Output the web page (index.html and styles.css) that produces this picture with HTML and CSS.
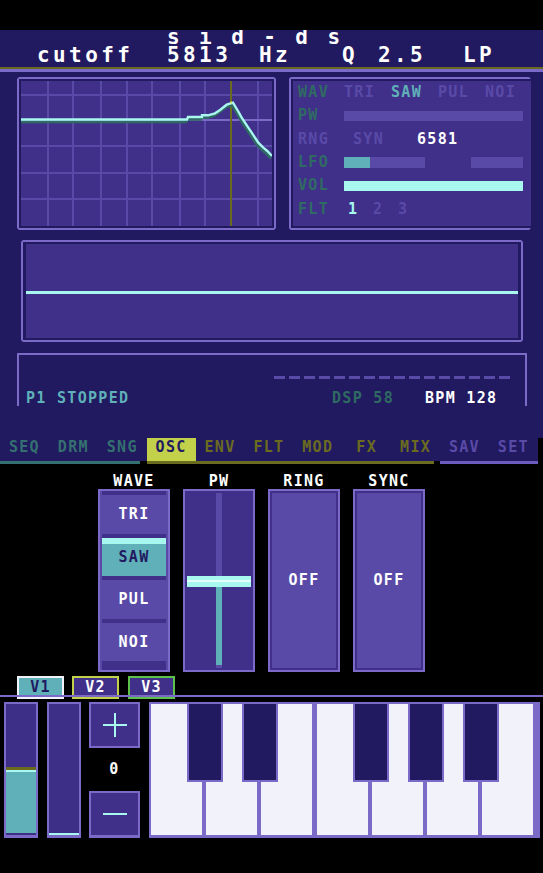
FILE: index.html
```html
<!DOCTYPE html>
<html lang="en">

<head>
    <meta charset="UTF-8">
    <meta name="viewport" content="width=device-width, initial-scale=1.0">
    <title>sid-ds</title>
    <link rel="stylesheet" href="styles.css">
</head>

<body>
    <div class="notch"></div>

    <header class="header">
        <div class="header-body">
            <div class="title">s i d - d s</div>
            <div class="readout">
                <span class="r-cutoff">cutoff</span>
                <span class="r-freq">5813</span>
                <span class="r-hz">Hz</span>
                <span class="r-q">Q</span>
                <span class="r-res">2.5</span>
                <span>LP</span>
            </div>
        </div>
    </header>

    <div class="deck">
        <div class="top-row">
            <!-- filter response -->
            <div class="frame graph">
                <div class="fill">
                    <svg width="251" height="145" viewBox="0 0 251 145">
                        <g fill="#5a4aa8" shape-rendering="crispEdges">
                            <rect x="26" y="0" width="2" height="145" />
                            <rect x="51" y="0" width="2" height="145" />
                            <rect x="79" y="0" width="2" height="145" />
                            <rect x="105" y="0" width="2" height="145" />
                            <rect x="130" y="0" width="2" height="145" />
                            <rect x="158" y="0" width="2" height="145" />
                            <rect x="183" y="0" width="2" height="145" />
                            <rect x="236" y="0" width="2" height="145" />
                            <rect x="0" y="13" width="251" height="2" />
                            <rect x="0" y="64" width="251" height="2" />
                            <rect x="0" y="91" width="251" height="2" />
                            <rect x="0" y="117" width="251" height="2" />
                        </g>
                        <rect x="0" y="38" width="251" height="2" fill="#7b6ac8" shape-rendering="crispEdges" />
                        <rect x="209" y="0" width="2" height="145" fill="#6b6b1f" shape-rendering="crispEdges" />
                        <polyline fill="none" stroke="#2f6b62" stroke-width="2.6" transform="translate(-1 2.5)"
                            points="0,38.5 166,38.5 167,36 181,36 181,34.3 187,34.3 194,32.3 199,29 205.7,23.7 212,21.7 214,25 217,30 220.7,36.7 224,41.7 227.3,46.7 230.7,51.7 234,56.7 237.3,61.7 242.3,66.7 246.3,70 251,75" />
                        <polyline fill="none" stroke="#a8f8f0" stroke-width="2.4"
                            points="0,38.5 166,38.5 167,36 181,36 181,34.3 187,34.3 194,32.3 199,29 205.7,23.7 212,21.7 214,25 217,30 220.7,36.7 224,41.7 227.3,46.7 230.7,51.7 234,56.7 237.3,61.7 242.3,66.7 246.3,70 251,75" />
                        <rect x="209" y="20.5" width="2" height="2" fill="#d8e060" />
                    </svg>
                </div>
            </div>

            <!-- voice summary -->
            <div class="frame params">
                <div class="fill param-list">
                    <div class="prow">
                        <span class="plabel">WAV</span>
                        <span class="opt">TRI</span>
                        <span class="opt on">SAW</span>
                        <span class="opt">PUL</span>
                        <span class="opt">NOI</span>
                    </div>
                    <div class="prow">
                        <span class="plabel">PW</span>
                        <span class="bar pw-bar"></span>
                    </div>
                    <div class="prow">
                        <span class="plabel dim">RNG</span>
                        <span class="syn">SYN</span>
                        <span class="chip">6581</span>
                    </div>
                    <div class="prow">
                        <span class="plabel">LFO</span>
                        <span class="bar lfo-bar"><span class="bar-level" style="width: 26px"></span></span>
                        <span class="bar lfo-bar2"></span>
                    </div>
                    <div class="prow">
                        <span class="plabel">VOL</span>
                        <span class="bar vol-bar"></span>
                    </div>
                    <div class="prow">
                        <span class="plabel">FLT</span>
                        <span class="flt-num first on">1</span>
                        <span class="flt-num">2</span>
                        <span class="flt-num">3</span>
                    </div>
                </div>
            </div>
        </div>

        <!-- oscilloscope -->
        <div class="frame scope">
            <div class="fill scope-fill">
                <div class="trace"></div>
            </div>
        </div>

        <!-- transport -->
        <div class="status">
            <div class="dashes"></div>
            <div class="status-line">
                <span class="st-state">P1 STOPPED</span>
                <span class="st-dsp">DSP 58</span>
                <span>BPM 128</span>
            </div>
        </div>
    </div>

    <nav class="tabs">
        <span class="tab seq">SEQ</span>
        <span class="tab seq">DRM</span>
        <span class="tab seq">SNG</span>
        <span class="tab active">OSC</span>
        <span class="tab snd">ENV</span>
        <span class="tab snd">FLT</span>
        <span class="tab snd">MOD</span>
        <span class="tab snd">FX</span>
        <span class="tab snd">MIX</span>
        <span class="tab sys">SAV</span>
        <span class="tab sys">SET</span>
    </nav>
    <div class="tab-lines">
        <span class="line-seq"></span>
        <span class="line-snd"></span>
        <span class="line-sys"></span>
    </div>

    <section class="osc">
        <div class="ctrl">
            <div class="ctrl-label">WAVE</div>
            <div class="ctrl-box wave-box">
                <div class="wave-btn">TRI</div>
                <div class="wave-btn selected">SAW</div>
                <div class="wave-btn">PUL</div>
                <div class="wave-btn">NOI</div>
            </div>
        </div>
        <div class="ctrl">
            <div class="ctrl-label">PW</div>
            <div class="ctrl-box pw-box">
                <div class="track-top"></div>
                <div class="handle"></div>
                <div class="track-level"></div>
                <div class="track-end"></div>
            </div>
        </div>
        <div class="ctrl">
            <div class="ctrl-label">RING</div>
            <div class="ctrl-box toggle">OFF</div>
        </div>
        <div class="ctrl">
            <div class="ctrl-label">SYNC</div>
            <div class="ctrl-box toggle">OFF</div>
        </div>
    </section>

    <div class="voices">
        <span class="vtab v1">V1</span>
        <span class="vtab v2">V2</span>
        <span class="vtab v3">V3</span>
    </div>
    <div class="rule"></div>

    <section class="pads">
        <div class="slider">
            <div class="slider-level"></div>
        </div>
        <div class="slider slider-b">
            <div class="slider-level empty"></div>
        </div>
        <div class="stepper">
            <div class="step-btn">
                <svg width="24" height="24" viewBox="0 0 24 24" shape-rendering="crispEdges">
                    <rect x="11" y="0" width="2" height="24" fill="#a8f8f0" />
                    <rect x="0" y="11" width="24" height="2" fill="#a8f8f0" />
                </svg>
            </div>
            <div class="step-val">0</div>
            <div class="step-btn minus">
                <svg width="24" height="2" viewBox="0 0 24 2" shape-rendering="crispEdges">
                    <rect x="0" y="0" width="24" height="2" fill="#a8f8f0" />
                </svg>
            </div>
        </div>
        <div class="keys">
            <span class="white"></span>
            <span class="white"></span>
            <span class="white"></span>
            <span class="white f-key"></span>
            <span class="white"></span>
            <span class="white"></span>
            <span class="white"></span>
            <span class="black" style="left: 38px"></span>
            <span class="black" style="left: 93px"></span>
            <span class="black" style="left: 204px"></span>
            <span class="black" style="left: 259px"></span>
            <span class="black" style="left: 314px"></span>
        </div>
    </section>
</body>

</html>
```

FILE: styles.css
```css
* {
    box-sizing: border-box;
}

body {
    margin: 0;
    width: 543px;
    background: #000;
    color: #fff;
    font-family: "DejaVu Sans Mono", "Liberation Mono", monospace;
    font-weight: bold;
    font-size: 15px;
    line-height: 15px;
    letter-spacing: 1.3px;
}

.notch {
    height: 30px;
}

/* header */
.header {
    background: #211a60;
    border-bottom: 3px solid #7b6ac8;
}

.header-body {
    height: 39px;
    overflow: hidden;
    border-bottom: 2px solid #6b6b1f;
    font-size: 21px;
    letter-spacing: 3.4px;
}

.title {
    line-height: 14px;
    padding-left: 167px;
}

.readout {
    display: flex;
    line-height: 22px;
    padding-left: 37px;
}

.r-cutoff { width: 130px; }
.r-freq { width: 92px; }
.r-hz { width: 83px; }
.r-q { width: 36px; }
.r-res { width: 85px; }

/* main deck */
.deck {
    height: 366px;
    padding-top: 5px;
    background: #211a60;
}

.top-row {
    display: flex;
    gap: 13px;
    height: 153px;
    padding-left: 17px;
}

.frame {
    border: 2px solid #7b6ac8;
    padding: 2px;
    clip-path: polygon(2px 0, calc(100% - 2px) 0, 100% 2px, 100% calc(100% - 2px),
            calc(100% - 2px) 100%, 2px 100%, 0 calc(100% - 2px), 0 2px);
}

.fill {
    height: 100%;
    background: #40308a;
}

.graph {
    width: 259px;
}

.graph svg {
    display: block;
}

.params {
    width: 242px;
    border-right: 0;
    padding-right: 0;
}

.param-list {
    display: grid;
    grid-auto-rows: 23.3px;
    padding-left: 5px;
}

.prow {
    display: flex;
    align-items: center;
}

.plabel {
    width: 46px;
    color: #2f6b62;
}

.plabel.dim,
.syn,
.opt,
.flt-num {
    color: #5a4aa8;
}

.opt {
    width: 47px;
}

.opt.on {
    color: #5fb0b8;
}

.syn {
    width: 64px;
    margin-left: 9px;
}

.chip {
    color: #fff;
}

.flt-num {
    width: 25px;
}

.flt-num.first {
    margin-left: 4px;
}

.flt-num.on {
    color: #a8f8f0;
}

.bar {
    display: block;
    height: 10px;
    background: #5a4aa8;
}

.pw-bar {
    width: 179px;
}

.lfo-bar {
    width: 81px;
    height: 11px;
}

.lfo-bar2 {
    width: 52px;
    height: 11px;
    margin-left: 46px;
}

.bar-level {
    display: block;
    height: 100%;
    background: #5fb0b8;
}

.vol-bar {
    width: 179px;
    background: #a8f8f0;
}

/* scope */
.scope {
    height: 102px;
    margin: 10px 20px 0 21px;
    padding: 2px 3px;
}

.scope-fill {
    padding-top: 47px;
}

.trace {
    height: 3px;
    background: #a8f8f0;
}

/* transport */
.status {
    height: 53px;
    margin: 11px 16px 0 17px;
    padding: 21px 0 0 7px;
    border: 2px solid #7b6ac8;
    border-bottom: 0;
}

.dashes {
    width: 236px;
    height: 3px;
    margin-left: 248px;
    background: repeating-linear-gradient(90deg, #5a4aa8 0 11px, transparent 11px 15px);
}

.status-line {
    display: flex;
    margin-top: 12px;
}

.st-state {
    width: 306px;
    color: #5fb0b8;
}

.st-dsp {
    width: 93px;
    color: #2f6b62;
}

/* page tabs */
.tabs {
    display: flex;
    width: 538px;
    background: #211a60;
}

.tab {
    width: 48.9px;
    height: 23px;
    line-height: 19px;
    text-align: center;
}

.tab.seq { color: #357070; }
.tab.snd { color: #6b6b1f; }
.tab.sys { color: #5a4aa8; }

.tab.active {
    background: #c2d04a;
    color: #211a60;
}

.tab-lines {
    display: flex;
    height: 3px;
}

.line-seq {
    width: 140px;
    background: #357070;
}

.line-snd {
    width: 287px;
    margin-left: 7px;
    background: #6b6b1f;
}

.line-sys {
    width: 98px;
    margin-left: 6px;
    background: #6d5cc0;
}

/* oscillator controls */
.osc {
    display: flex;
    gap: 13px;
    padding: 10px 0 0 98px;
}

.ctrl {
    width: 72px;
}

.ctrl-label {
    text-align: center;
}

.ctrl-box {
    height: 183px;
    border: 2px solid #7b6ac8;
    background: #40308a;
}

.wave-box {
    display: flex;
    flex-direction: column;
    gap: 4px;
    padding: 4px 2px;
    box-shadow: inset 2px 0 0 #5a4aa8, inset -2px 0 0 #5a4aa8;
}

.wave-btn {
    height: 38.5px;
    line-height: 38px;
    text-align: center;
    background: #5a4aa8;
}

.wave-btn.selected {
    background: #5fb0b8;
    color: #211a60;
    box-shadow: inset 0 6px 0 #a8f8f0;
}

.pw-box {
    display: flex;
    flex-direction: column;
    align-items: center;
    padding-top: 2px;
}

.track-top {
    width: 6px;
    height: 83px;
    background: #5a4aa8;
}

.handle {
    width: 64px;
    height: 11px;
    background: linear-gradient(#a8f8f0 0 4px, #e4fffb 4px 6px, #a8f8f0 6px);
}

.track-level {
    width: 6px;
    height: 78px;
    background: #5fb0b8;
}

.track-end {
    width: 6px;
    height: 3px;
    background: #5a4aa8;
}

.toggle {
    display: flex;
    align-items: center;
    justify-content: center;
    background: #5a4aa8;
    box-shadow: inset 0 0 0 2px #40308a;
}

/* voice select */
.voices {
    display: flex;
    gap: 8px;
    margin: 4px 0 -4px;
    padding-left: 17px;
}

.vtab {
    width: 47px;
    height: 23px;
    line-height: 19px;
    text-align: center;
    border: 2px solid;
    background: #40308a;
}

.v1 {
    border-color: #f2f2fa;
    background: #5fb0b8;
    color: #211a60;
}

.v2 { border-color: #c2d04a; }

.v3 {
    border-color: #5cc24a;
    margin-left: 1px;
}

.rule {
    position: relative;
    height: 2px;
    margin-bottom: 5px;
    background: #7b6ac8;
}

/* bottom pads */
.pads {
    display: flex;
    height: 136px;
    padding-left: 4px;
}

.slider {
    display: flex;
    flex-direction: column;
    justify-content: flex-end;
    width: 34px;
    border: 2px solid #7b6ac8;
    border-bottom-width: 3px;
    background: #3d2e88;
}

.slider-b {
    margin-left: 9px;
}

.slider-level {
    height: 66px;
    margin-bottom: 2px;
    border-top: 3px solid #6b6b1f;
    background: #5fb0b8;
    box-shadow: inset 0 2px 0 #a8f8f0;
}

.slider-level.empty {
    height: 2px;
    margin-bottom: 0;
    border-top: 0;
    background: #a8f8f0;
}

.stepper {
    display: flex;
    flex-direction: column;
    width: 51px;
    margin-left: 8px;
}

.step-btn {
    display: flex;
    align-items: center;
    justify-content: center;
    height: 46px;
    border: 2px solid #7b6ac8;
    background: #40308a;
}

.step-btn svg {
    display: block;
}

.step-btn.minus {
    height: 47px;
    border-bottom-width: 3px;
}

.step-val {
    height: 43px;
    line-height: 43px;
    text-align: center;
}

.keys {
    position: relative;
    display: flex;
    gap: 4px;
    width: 391px;
    margin-left: 9px;
    padding: 2px 7px 3px 2px;
    background: #7b6ac8;
}

.white {
    width: 51px;
    background: #f2f2fa;
}

.f-key {
    margin-left: 1px;
}

.black {
    position: absolute;
    top: 0;
    width: 36px;
    height: 80px;
    border: 2px solid #7b6ac8;
    background: #211a60;
}
```
